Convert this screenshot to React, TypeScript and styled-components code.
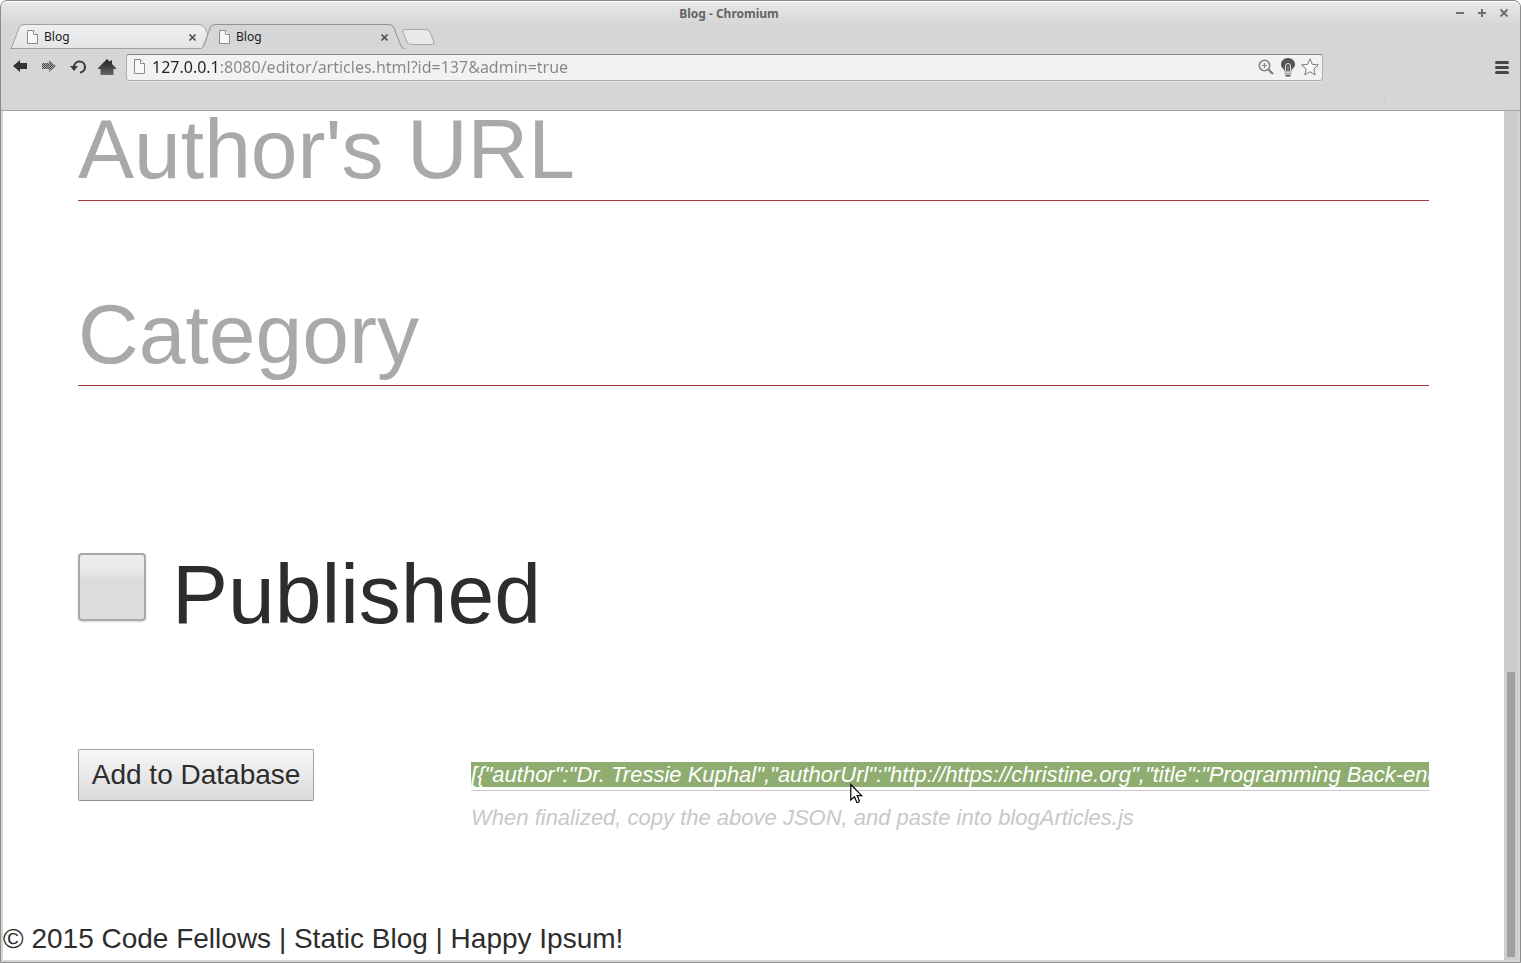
import React, { useState } from 'react';
import styled, { createGlobalStyle } from 'styled-components';

const GlobalStyle = createGlobalStyle`
  *, *::before, *::after { box-sizing: border-box; }
  html, body { margin: 0; background: #fff; }
  button, input { font: inherit; color: inherit; margin: 0; }
`;

const Window = styled.div`
  display: flex;
  flex-direction: column;
  height: 100vh;
  overflow: hidden;
  border: 1px solid #8c8c8c;
  border-radius: 7px 7px 0 0;
  background: #d6d6d6;
  font-family: 'Noto Sans', sans-serif;
`;

const TitleBar = styled.header`
  display: grid;
  grid-template-columns: 1fr auto;
  align-items: center;
  height: 23px;
  padding: 0 5px 0 8px;
  border-top: 1px solid #fff;
  border-radius: 6px 6px 0 0;
  background: linear-gradient(#e9e9e9, #d6d6d6);
`;

const WindowTitle = styled.h1`
  margin: 0;
  padding-top: 2px;
  font-size: 12px;
  line-height: 16px;
  font-weight: 700;
  text-align: center;
  color: #646464;
`;

const WindowControls = styled.div`
  display: flex;
`;

const IconButton = styled.button<{ $width: number; $height: number }>`
  display: flex;
  align-items: center;
  justify-content: center;
  flex: none;
  width: ${(p) => p.$width}px;
  height: ${(p) => p.$height}px;
  padding: 0;
  border: 0;
  background: none;
`;

const TabStrip = styled.nav`
  display: flex;
  height: 24px;
  padding-left: 9px;
`;

const Tab = styled.div<{ $active?: boolean }>`
  position: relative;
  z-index: ${(p) => (p.$active ? 1 : 0)};
  display: flex;
  align-items: center;
  width: 192px;
  padding: 2px 2px 0 16px;
`;

const TabShape = styled.svg`
  position: absolute;
  left: 0;
  top: 0;
  z-index: -1;
`;

const TabLabel = styled.button`
  display: flex;
  align-items: center;
  gap: 4px;
  flex: 1;
  height: 22px;
  padding: 0;
  border: 0;
  background: none;
  font-size: 12px;
  line-height: 16px;
  color: #1c1c1c;
`;

const NewTab = styled.button`
  display: flex;
  padding: 4px 0 0 7px;
  border: 0;
  background: none;
`;

const Toolbar = styled.div`
  display: flex;
  align-items: flex-start;
  height: 39px;
  padding: 6px 4px 0 4px;
`;

const AddressBar = styled.div`
  display: flex;
  align-items: center;
  flex: 1;
  height: 27px;
  margin: 0 164px 0 5px;
  padding: 0 1px 2px 4px;
  border: 1px solid #aeaeae;
  border-top-color: #868686;
  border-radius: 3px;
  background: #f2f2f2;
  box-shadow: 0 1px 0 #e6e6e6;
`;

const AddressInput = styled.input`
  flex: 1;
  min-width: 0;
  height: 22px;
  padding: 0 0 0 3px;
  border: 0;
  outline: 0;
  background: linear-gradient(90deg, #222 69px, #878787 69px);
  background-clip: text;
  -webkit-text-fill-color: transparent;
  font-size: 16px;
  line-height: 22px;
`;

const BookmarkBar = styled.div`
  display: flex;
  justify-content: flex-end;
  height: 24px;
  padding-right: 135px;
  border-bottom: 1px solid #a3a3a3;
`;

const BookmarkDivider = styled.span`
  width: 1px;
  height: 20px;
  background: linear-gradient(#dce4ec, #c4cfdb, #d6d6d6);
`;

const Viewport = styled.div`
  display: flex;
  flex: 1;
  min-height: 0;
  margin: 0 2px 2px;
  background: #fff;
`;

const Page = styled.div`
  flex: 1;
  min-width: 0;
  overflow: hidden;
  font-family: 'Liberation Sans', Arial, sans-serif;
  font-size: 28px;
  line-height: 32px;
  color: #2d2d2d;
`;

const Editor = styled.form`
  margin-top: -11px;
  padding: 0 5%;
`;

const Field = styled.input`
  display: block;
  width: 100%;
  height: 101px;
  margin-bottom: 84px;
  padding: 0 0 2px;
  border: 0;
  border-bottom: 1px solid #a83c3c;
  outline: 0;
  background: none;
  font-size: 84px;
  &::placeholder { color: #a9a9a9; opacity: 1; }
`;

const CheckRow = styled.label`
  display: flex;
  align-items: flex-start;
  gap: 26px;
  margin-top: 159px;
  font-size: 84px;
  line-height: 98px;
`;

const CheckBox = styled.input`
  appearance: none;
  width: 68px;
  height: 68px;
  margin-top: 8px;
  border: 2px solid #a9a9a9;
  border-radius: 4px;
  background: linear-gradient(#ededed, #e9e9e9 22%, #dcdcdc 40%, #dcdcdc);
  box-shadow: 0 1px 2px rgba(0, 0, 0, 0.15);
`;

const ExportRow = styled.div`
  display: grid;
  grid-template-columns: 393px 1fr;
  align-items: start;
  margin-top: 106px;
`;

const SubmitButton = styled.button`
  justify-self: start;
  width: 236px;
  height: 52px;
  padding: 0;
  border: 1px solid #a2a2a2;
  border-bottom-color: #8e8e8e;
  border-radius: 2px;
  background: linear-gradient(#f7f7f7, #dbdbdb);
`;

const ExportColumn = styled.div`
  position: relative;
  min-width: 0;
  padding-top: 13px;
  font-size: 22px;
  line-height: 25px;
  font-style: italic;
`;

const JsonOutput = styled.input`
  display: block;
  width: 100%;
  height: 29px;
  padding: 0 0 3px;
  border: 0;
  border-bottom: 1px solid #c8c8c8;
  outline: 0;
  background: #8fad70 content-box;
  color: #fff;
`;

const Hint = styled.label`
  display: block;
  margin-top: 14px;
  color: #c8c8c8;
`;

const Pointer = styled.svg`
  position: absolute;
  left: 379px;
  top: 34px;
`;

const Footer = styled.footer`
  margin-top: 93px;
`;

const ScrollTrack = styled.div`
  display: grid;
  grid-template-rows: 561fr 285fr;
  width: 14px;
  padding: 0 3px 3px;
  background: #cdcdcd;
`;

const ScrollThumb = styled.div`
  grid-row: 2;
  background: #a0a0a0;
`;

const PageIcon = () => (
  <svg width="14" height="16" viewBox="0 0 14 16" fill="none">
    <path d="M1.5 1.5h6l4 4v9h-10z" fill="#f8f8f8" stroke="#8b8b8b" />
    <path d="M7.5 1.5v4h4" fill="#fff" stroke="#8b8b8b" />
  </svg>
);

const SmallClose = () => (
  <svg width="9" height="9" viewBox="0 0 9 9">
    <path d="M1.5 1.5l6 6M7.5 1.5l-6 6" stroke="#4c4c4c" strokeWidth="1.7" />
  </svg>
);

interface TabItemProps {
  title: string;
  active?: boolean;
}

const TabItem = ({ title, active }: TabItemProps) => (
  <Tab $active={active}>
    <TabShape width="206" height="26" viewBox="0 0 206 26">
      <defs>
        <linearGradient id="idle-tab" x1="0" y1="0" x2="0" y2="1">
          <stop offset="0" stopColor="#f0f0f0" />
          <stop offset="1" stopColor="#e4e4e4" />
        </linearGradient>
      </defs>
      {active ? (
        <>
          <path d="M0 25C3 23 3 20 8 5Q9 .5 13 .5H186Q190 .5 192 4L200 22Q201 24 204 25Z" fill="#d6d6d6" />
          <path d="M-2 24.5C1 24 2 21 8 4Q9 .5 13 .5H187Q191 .5 192 4L199 22Q200 24.500 203 24.500" fill="none" stroke="#929292" />
        </>
      ) : (
        <path
          d="M.5 24.500Q2 23 3 20L9 4Q10 .5 14 .5H188Q193 .5 195 4Q198 11 198 11L194 22Q193 24.500 191 24.500Z"
          fill="url(#idle-tab)"
          stroke="#a0a0a0"
        />
      )}
    </TabShape>
    <TabLabel type="button">
      <PageIcon />
      {title}
    </TabLabel>
    <IconButton type="button" aria-label={`Close ${title}`} $width={15} $height={20}>
      <SmallClose />
    </IconButton>
  </Tab>
);

const json =
  '[{"author":"Dr. Tressie Kuphal","authorUrl":"http://https://christine.org","title":"Programming Back-end"}]';

export default function App() {
  const [url, setUrl] = useState('127.0.0.1:8080/editor/articles.html?id=137&admin=true');

  return (
    <>
      <GlobalStyle />
      <Window>
        <TitleBar>
          <WindowTitle>Blog - Chromium</WindowTitle>
          <WindowControls>
            <IconButton type="button" aria-label="Minimize" $width={22} $height={20}>
              <svg width="10" height="10" viewBox="0 0 10 10">
                <path d="M1 5h8" stroke="#6e6e6e" strokeWidth="2" />
              </svg>
            </IconButton>
            <IconButton type="button" aria-label="Maximize" $width={22} $height={20}>
              <svg width="10" height="10" viewBox="0 0 10 10">
                <path d="M1 5h8M5 1v8" stroke="#6e6e6e" strokeWidth="2" />
              </svg>
            </IconButton>
            <IconButton type="button" aria-label="Close window" $width={22} $height={20}>
              <svg width="10" height="10" viewBox="0 0 10 10">
                <path d="M1.500 1.500l7 7M8.500 1.500l-7 7" stroke="#6e6e6e" strokeWidth="2" />
              </svg>
            </IconButton>
          </WindowControls>
        </TitleBar>

        <TabStrip>
          <TabItem title="Blog" />
          <TabItem title="Blog" active />
          <NewTab type="button" aria-label="New tab">
            <svg width="34" height="18" viewBox="0 0 34 18">
              <path
                d="M4 1.500H25Q28 1.500 29 4L33 14Q33.500 16.500 31 16.500H11Q7 16.500 6 14L2 4Q1 1.500 4 1.500Z"
                fill="#e9e9e9"
                stroke="#a6a6a6"
              />
            </svg>
          </NewTab>
        </TabStrip>

        <Toolbar>
          <IconButton type="button" aria-label="Back" $width={29} $height={25}>
            <svg width="16" height="16" viewBox="0 0 16 16">
              <path d="M1 7L8 1V4H15V10H8V13Z" fill="#333" />
            </svg>
          </IconButton>
          <IconButton type="button" aria-label="Forward" $width={29} $height={25}>
            <svg width="16" height="16" viewBox="0 0 16 16">
              <defs>
                <pattern id="dither" width="2" height="2" patternUnits="userSpaceOnUse">
                  <rect width="2" height="2" fill="#aaa" />
                  <path d="M0 0h1v1h-1zM1 1h1v1h-1z" fill="#4a4a4a" />
                </pattern>
              </defs>
              <path d="M15 7L8 1V4H1V10H8V13Z" fill="url(#dither)" />
            </svg>
          </IconButton>
          <IconButton type="button" aria-label="Reload" $width={29} $height={25}>
            <svg width="18" height="18" viewBox="0 0 18 18" fill="none">
              <path d="M5 9A5.500 5.500 0 1 1 11 14.500" stroke="#3a3a3a" strokeWidth="2.200" />
              <path d="M1 8H9L5 13Z" fill="#3a3a3a" />
            </svg>
          </IconButton>
          <IconButton type="button" aria-label="Home" $width={29} $height={25}>
            <svg width="18" height="18" viewBox="0 0 18 18">
              <defs>
                <linearGradient id="home-fill" x1="0" y1="0" x2="0" y2="1">
                  <stop offset="0" stopColor="#222" />
                  <stop offset="1" stopColor="#666" />
                </linearGradient>
              </defs>
              <path d="M9 1L12 4V2.500H14V6L18 10V11H15.500V17H2.500V11H0V10Z" fill="url(#home-fill)" />
            </svg>
          </IconButton>

          <AddressBar>
            <IconButton type="button" aria-label="Page information" $width={18} $height={22}>
              <svg width="14" height="18" viewBox="0 0 14 18" fill="none">
                <path d="M1.500 1.500h6l4 4v10h-10z" fill="#f8f8f8" stroke="#8b8b8b" />
                <path d="M7.500 1.500v4h4" fill="#fff" stroke="#8b8b8b" />
              </svg>
            </IconButton>
            <AddressInput aria-label="Address" value={url} onChange={(e) => setUrl(e.target.value)} />
            <IconButton type="button" aria-label="Zoom" $width={22} $height={22}>
              <svg width="16" height="16" viewBox="0 0 16 16" fill="none" stroke="#858585">
                <circle cx="6.500" cy="6.500" r="5.200" strokeWidth="1.600" />
                <path d="M10.500 10.500L15 15" strokeWidth="2.400" />
                <path d="M4 6.500h5M6.500 4v5" strokeWidth="1.200" />
              </svg>
            </IconButton>
            <IconButton type="button" aria-label="Lights" $width={22} $height={22}>
              <svg width="16" height="20" viewBox="0 0 16 20">
                <path d="M8 1C3.500 1 1 4 1 7.500C1 11 4.500 11.500 4.500 14H11.500C11.500 11.500 15 11 15 7.500C15 4 12.500 1 8 1Z" fill="#555" />
                <path d="M5.500 14V9Q5.500 6.500 8 6.500Q10.500 6.500 10.500 9V14" fill="none" stroke="#e4e4e4" />
                <path d="M8 9V14" stroke="#b4b4b4" />
                <path d="M4.500 14.800h7M4.500 16.800h7" stroke="#9a9a9a" strokeWidth="1.200" />
                <path d="M5.500 18.700h5" stroke="#555" strokeWidth="1.600" />
              </svg>
            </IconButton>
            <IconButton type="button" aria-label="Bookmark this page" $width={22} $height={22}>
              <svg width="18" height="18" viewBox="0 0 18 18">
                <path
                  d="M9 .8L11.400 6.400L17.400 6.900L12.800 10.900L14.200 16.900L9 13.700L3.800 16.900L5.200 10.900L.6 6.900L6.600 6.400Z"
                  fill="#fafafa"
                  stroke="#777"
                  strokeLinejoin="round"
                />
              </svg>
            </IconButton>
          </AddressBar>

          <IconButton type="button" aria-label="Menu" $width={29} $height={25}>
            <svg width="14" height="14" viewBox="0 0 14 14">
              <path d="M1.500 2.500h11M1.500 7.500h11M1.500 12.500h11" stroke="#474747" strokeWidth="3" strokeLinecap="round" />
            </svg>
          </IconButton>
        </Toolbar>

        <BookmarkBar>
          <BookmarkDivider />
        </BookmarkBar>

        <Viewport>
          <Page>
            <Editor onSubmit={(e) => e.preventDefault()}>
              <Field aria-label="Author's URL" placeholder="Author's URL" />
              <Field aria-label="Category" placeholder="Category" />
              <CheckRow>
                <CheckBox type="checkbox" />
                Published
              </CheckRow>
              <ExportRow>
                <SubmitButton type="submit">Add to Database</SubmitButton>
                <ExportColumn>
                  <JsonOutput id="article-json" readOnly value={json} />
                  <Hint htmlFor="article-json">When finalized, copy the above JSON, and paste into blogArticles.js</Hint>
                  <Pointer width="14" height="22" viewBox="0 0 14 22">
                    <path
                      d="M.8 1.500V17L4.500 13.800L6.700 19.200Q8 20.200 9.400 18L7.200 12.600H11.600Z"
                      fill="#fff"
                      stroke="#000"
                      strokeWidth="1.200"
                    />
                  </Pointer>
                </ExportColumn>
              </ExportRow>
            </Editor>
            <Footer>© 2015 Code Fellows | Static Blog | Happy Ipsum!</Footer>
          </Page>
          <ScrollTrack>
            <ScrollThumb />
          </ScrollTrack>
        </Viewport>
      </Window>
    </>
  );
}
